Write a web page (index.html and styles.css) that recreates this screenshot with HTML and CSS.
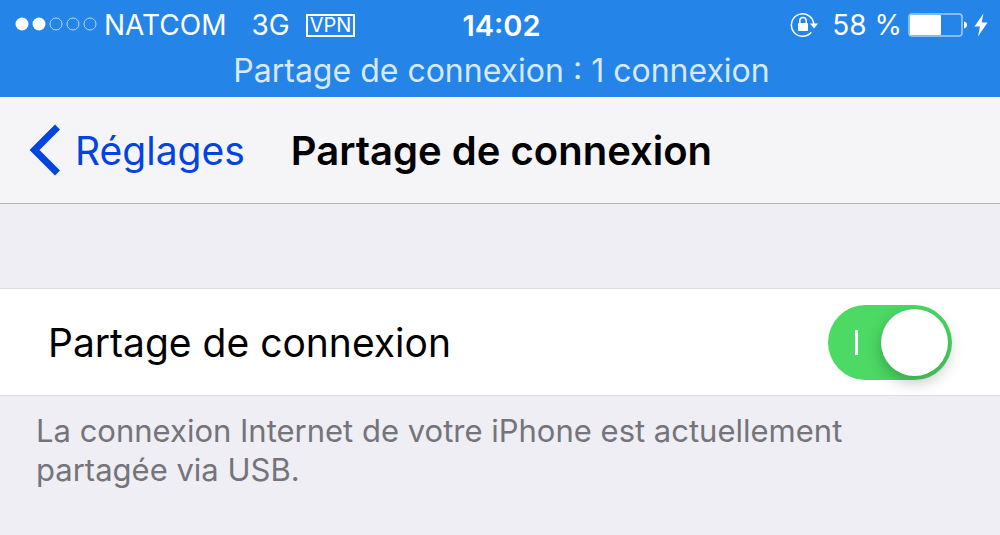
FILE: index.html
```html
<!DOCTYPE html>
<html lang="fr">
<head>
  <meta charset="UTF-8" />
  <meta name="viewport" content="width=device-width, initial-scale=1.0"/>
  <title>Partage de connexion</title>
  <link rel="stylesheet" href="styles.css">
</head>
<body>
  <div class="status">
    <div class="status-bar">
      <div class="status-left">
        <svg class="signal" width="82" height="16" viewBox="0 0 82 16" aria-hidden="true">
          <circle cx="7" cy="7" r="6.500" fill="#fff"/>
          <circle cx="24" cy="7" r="6.500" fill="#fff"/>
          <g fill="none" stroke="#b5d5f8">
            <circle cx="41" cy="7" r="6"/>
            <circle cx="58" cy="7" r="6"/>
            <circle cx="75" cy="7" r="6"/>
          </g>
        </svg>
        <span class="carrier">NATCOM</span>
        <span class="network">3G</span>
        <span class="vpn">VPN</span>
      </div>
      <time class="clock">14:02</time>
      <div class="status-right">
        <svg class="lock" width="28" height="26" viewBox="0 0 28 26" aria-hidden="true">
          <path d="M21.2 20.2A11.2 11.2 0 1 1 23.8 12.6" fill="none" stroke="#fff" stroke-width="1.500"/>
          <path d="M20 11.500H28L24 16.600Z" fill="#fff"/>
          <rect x="8" y="11" width="10" height="8" rx="1" fill="#fff"/>
          <path d="M9.800 11.500V8.700a3.200 3.200 0 0 1 6.400 0V11.500" fill="none" stroke="#fff" stroke-width="1.500"/>
        </svg>
        <span class="percent">58 %</span>
        <svg class="battery" width="60" height="24" viewBox="0 0 60 24" aria-hidden="true">
          <rect x="1" y="1" width="53" height="22" rx="3" fill="none" stroke="#a5cdf6" stroke-width="1.500"/>
          <rect x="2" y="2" width="31" height="20" rx="1" fill="#fff"/>
          <path d="M56 8.500c4 .6 4 6.400 0 7Z" fill="#fff"/>
        </svg>
        <svg class="bolt" width="14" height="24" viewBox="0 0 14 24" aria-hidden="true">
          <path d="M9.500 0.500L0.500 13.500H6L4 23.500L13.500 9.500H7.600Z" fill="#fff"/>
        </svg>
      </div>
    </div>
    <p class="sharing">Partage de connexion : 1 connexion</p>
  </div>

  <header class="nav">
    <a class="back" href="#">
      <svg width="32" height="52" viewBox="0 0 32 52" aria-hidden="true">
        <path d="M28.500 3L5.500 26L28.500 49" fill="none" stroke="#0343df" stroke-width="7"/>
      </svg>
      Réglages
    </a>
    <h1 class="title">Partage de connexion</h1>
  </header>

  <main>
    <div class="row">
      <label for="hotspot">Partage de connexion</label>
      <input class="switch" type="checkbox" role="switch" id="hotspot" checked />
    </div>
    <p class="note">La connexion Internet de votre iPhone est actuellement partagée via USB.</p>
  </main>
</body>
</html>
```
FILE: styles.css
```css
* {
  box-sizing: border-box;
}

body {
  margin: 0;
  background-color: #efeef4;
  color: #000;
  font-family: Inter, "Liberation Sans", sans-serif;
}

.status {
  background-color: #2484e8;
  color: #fff;
  height: 97px;
  padding: 6px 12px 0 15px;
}

.status-bar {
  display: grid;
  grid-template-columns: 1fr auto 1fr;
  align-items: center;
  height: 38px;
  font-size: 28px;
}

.status-left,
.status-right {
  display: flex;
  align-items: center;
  white-space: nowrap;
}

.status-right {
  justify-content: flex-end;
}

.carrier {
  margin-left: 7px;
}

.network {
  margin-left: 25px;
}

.vpn {
  margin-left: 16px;
  padding: 0 2px;
  border: 2px solid #fff;
  font-size: 20px;
  line-height: 19px;
}

.clock {
  font-size: 29px;
  font-weight: 600;
}

.percent {
  margin: 0 6px 0 14px;
}

.bolt {
  margin-left: 6px;
}

.sharing {
  margin: 0;
  color: #d8e9fc;
  font-size: 32px;
  line-height: 54px;
  text-align: center;
}

.nav {
  display: flex;
  align-items: center;
  gap: 46px;
  height: 107px;
  padding-left: 29px;
  background-color: #f5f5f7;
  border-bottom: 1px solid #b5b5b9;
}

.back {
  display: flex;
  align-items: center;
  gap: 14px;
  color: #0343df;
  font-size: 39px;
  text-decoration: none;
}

.title {
  margin: 0;
  font-size: 40px;
  font-weight: 600;
}

.row {
  display: flex;
  align-items: center;
  justify-content: space-between;
  height: 108px;
  margin-top: 84px;
  padding: 0 48px;
  background-color: #fff;
  border: solid #dcdce0;
  border-width: 1px 0;
  font-size: 39px;
}

.switch {
  appearance: none;
  display: flex;
  align-items: center;
  justify-content: space-between;
  width: 124px;
  height: 75px;
  margin: 0;
  padding: 0 4px 0 27px;
  border-radius: 38px;
  background-color: #4cd964;
  cursor: pointer;
}

.switch::before {
  content: "";
  width: 3px;
  height: 25px;
  background-color: #fff;
}

.switch::after {
  content: "";
  width: 67px;
  height: 67px;
  border-radius: 50%;
  background-color: #fff;
  box-shadow: 0 6px 16px rgba(0, 0, 0, 0.25);
}

.switch:not(:checked) {
  flex-direction: row-reverse;
  background-color: #e5e5ea;
}

.note {
  margin: 0;
  padding: 15px 36px;
  color: #74747a;
  font-size: 31px;
  line-height: 39px;
}
```
